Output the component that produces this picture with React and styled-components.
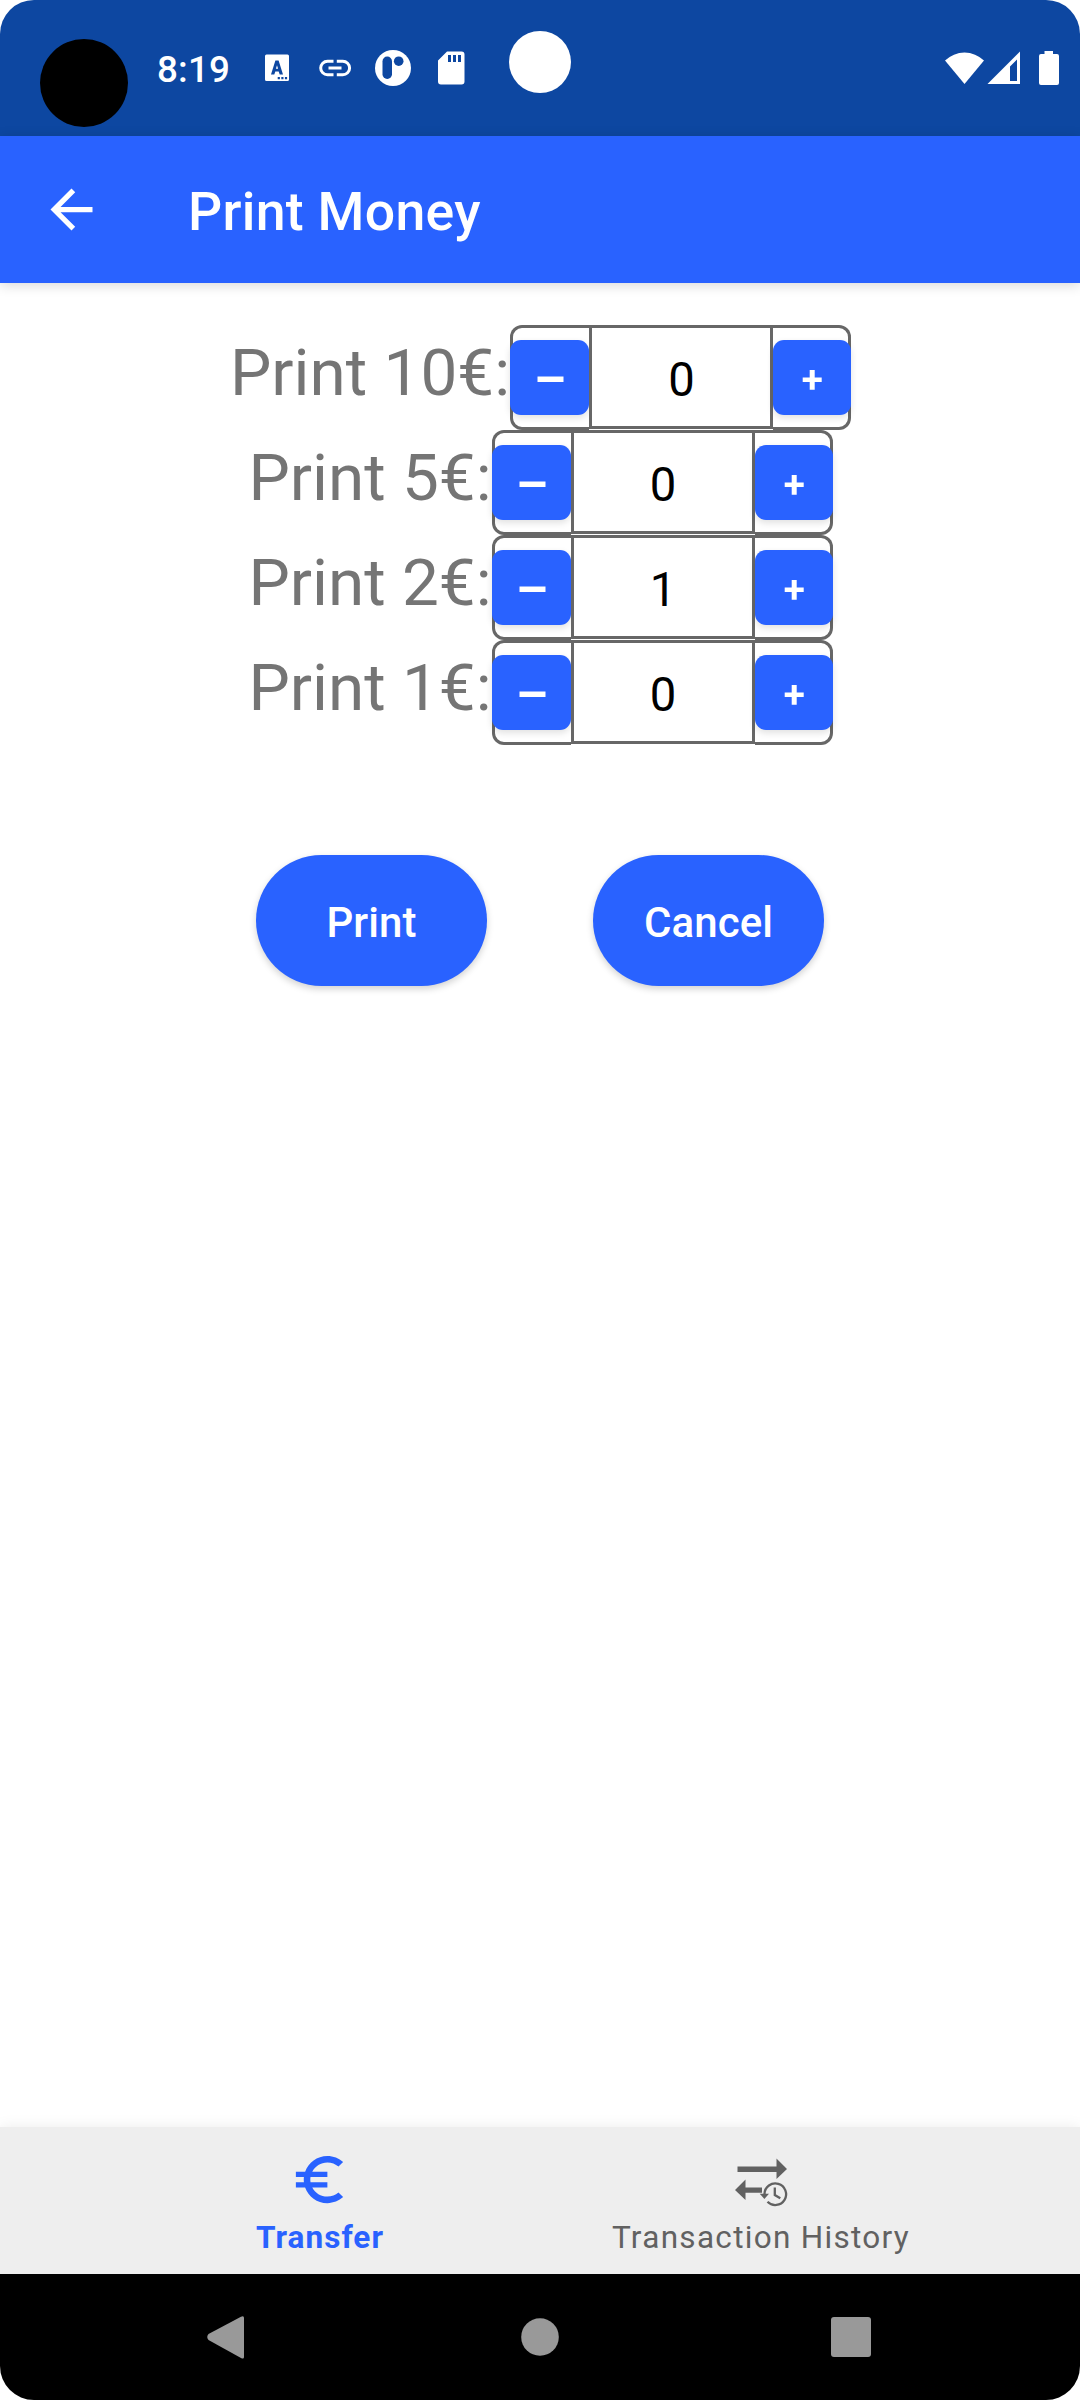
import React, { useState } from 'react';
import styled, { createGlobalStyle } from 'styled-components';

const GlobalStyle = createGlobalStyle`
  * { box-sizing: border-box; }
  body { margin: 0; background: #fff; font-family: Roboto, "Liberation Sans", sans-serif; }
  button { font-family: inherit; }
  svg { display: block; flex: none; }
`;

const Screen = styled.div`
  position: relative;
  display: flex;
  flex-direction: column;
  width: 1080px;
  height: 2400px;
  background: #fff;
  border-radius: 34px;
  overflow: hidden;
`;

const StatusBar = styled.header`
  display: flex;
  align-items: center;
  height: 136px;
  padding: 0 20px 0 157px;
  background: #0d47a1;
  color: #fff;
`;

const Clock = styled.span`
  width: 108px;
  font-size: 36.75px;
  font-weight: 500;
  line-height: 43px;
  letter-spacing: 0.2px;
  padding-top: 2px;
`;

const Notifications = styled.div`
  display: flex;
  flex: 1;
`;

const SystemIcons = styled.div`
  display: flex;
`;

const Dot = styled.div`
  position: absolute;
  left: ${(p) => p.$x}px;
  top: ${(p) => p.$y}px;
  width: ${(p) => p.$size}px;
  height: ${(p) => p.$size}px;
  border-radius: 50%;
  background: ${(p) => p.$color};
`;

const AppBar = styled.div`
  display: flex;
  align-items: center;
  gap: 84px;
  height: 147px;
  padding-left: 40px;
  background: #2962ff;
  color: #fff;
  box-shadow: 0 2px 12px rgba(0, 0, 0, 0.16);
  z-index: 1;
`;

const BackButton = styled.button`
  padding: 0 0 1px;
  border: 0;
  background: none;
  color: inherit;
`;

const Title = styled.h1`
  margin: 0;
  padding: 4px 0 0 1px;
  font-size: 53.6px;
  font-weight: 500;
  line-height: 62px;
  letter-spacing: 0.3px;
`;

const Content = styled.main`
  display: flex;
  flex: 1;
  flex-direction: column;
  align-items: center;
  padding-top: 42px;
`;

const Row = styled.div`
  display: flex;
  height: 105px;
`;

const Label = styled.span`
  padding: 9px 0 0 1px;
  color: #757575;
  font-size: 65.625px;
  line-height: 77px;
`;

const Stepper = styled.div`
  display: flex;
  align-items: center;
  width: 341px;
  height: 105px;
  border-radius: 12px;
  box-shadow: inset 0 0 0 3px #676767;
`;

const StepButton = styled.button`
  display: flex;
  align-items: center;
  justify-content: center;
  width: ${(p) => p.$width}px;
  height: 75px;
  padding: 0;
  border: 0;
  border-radius: 11px;
  background: #2962ff;
  color: #fff;
  box-shadow: 0 3px 7px rgba(0, 0, 0, 0.12);
`;

const Value = styled.output`
  width: 184px;
  height: 105px;
  padding-left: 1px;
  border-bottom: 1px solid #fff;
  box-shadow: inset 0 0 0 3px #676767;
  background: #fff;
  color: #000;
  font-size: 47.25px;
  line-height: 111px;
  text-align: center;
`;

const Actions = styled.div`
  display: flex;
  gap: 106px;
  padding-top: 110px;
`;

const ActionButton = styled.button`
  width: 231px;
  height: 131px;
  padding: 4px 0 0;
  border: 0;
  border-radius: 66px;
  background: #2962ff;
  color: #fff;
  font-size: 42px;
  font-weight: 500;
  letter-spacing: 0.1px;
  box-shadow: 0 3px 7px rgba(0, 0, 0, 0.18);
`;

const BottomTabs = styled.nav`
  display: flex;
  justify-content: center;
  height: 147px;
  padding-right: 1px;
  background: #eee;
  box-shadow: 0 0 14px rgba(0, 0, 0, 0.08);
`;

const Tab = styled.a`
  display: flex;
  flex-direction: column;
  align-items: center;
  width: 441px;
  padding-top: 21px;
  color: ${(p) => (p.$active ? '#2962ff' : '#616161')};
  font-size: 31.5px;
  font-weight: ${(p) => (p.$active ? 700 : 400)};
  letter-spacing: ${(p) => (p.$active ? 1.05 : 1.3)}px;
  line-height: 37px;
`;

const TabLabel = styled.span`
  padding: 8px 0 0 2px;
`;

const SystemNav = styled.footer`
  display: flex;
  align-items: center;
  height: 126px;
  background: #000;
  padding-left: 207px;
`;

const ROWS = [
  { amount: 10, count: 0 },
  { amount: 5, count: 0 },
  { amount: 2, count: 1 },
  { amount: 1, count: 0 },
];

function CashRow({ amount, count }) {
  const [value, setValue] = useState(count);
  return (
    <Row>
      <Label>Print {amount}€:</Label>
      <Stepper>
        <StepButton $width={79} aria-label="Decrease" onClick={() => setValue(Math.max(0, value - 1))}>
          <svg width="79" height="75" viewBox="0 0 79 75"><path d="M27.5 36.5h26v5.500h-26z" fill="currentColor" /></svg>
        </StepButton>
        <Value>{value}</Value>
        <StepButton $width={78} aria-label="Increase" onClick={() => setValue(value + 1)}>
          <svg width="78" height="75" viewBox="0 0 78 75"><path d="M36.7 30h5v7.400h7v4.600h-7v7.800h-5V42h-7v-4.600h7z" fill="currentColor" /></svg>
        </StepButton>
      </Stepper>
    </Row>
  );
}

export default function App() {
  return (
    <>
      <GlobalStyle />
      <Screen>
        <StatusBar>
          <Clock>8:19</Clock>
          <Notifications>
            <svg width="210" height="60" viewBox="0 0 210 60" fill="#fff">
              <path fillRule="evenodd" d="M1.500 16.500h21a1.500 1.500 0 0 1 1.500 1.500v23.500a1.500 1.500 0 0 1-1.500 1.500h-21A1.500 1.500 0 0 1 0 41.500V18A1.500 1.500 0 0 1 1.500 16.500zM10.400 22.500L6 36.500h3.300l1-3h3.400l1 3H18L13.600 22.500zm1.600 4.800l1.100 3.400h-2.200zM12.700 39v2.200h2.200V39zm3.600 0v2.200h2.200V39zm3.600 0v2.200h2.200V39z" />
              <path d="M68.500 23.200h-6a6.800 6.800 0 0 0 0 13.600h6M71.800 23.200h6a6.800 6.800 0 0 1 0 13.600h-6M63.500 30h13" fill="none" stroke="#fff" strokeWidth="3" />
              <circle cx="128" cy="30" r="18" />
              <rect x="117.500" y="18.500" width="9.500" height="22.500" rx="4.700" fill="#0d47a1" />
              <circle cx="133.700" cy="23.200" r="4.800" fill="#0d47a1" />
              <path fillRule="evenodd" d="M182 13.500h14.500a3 3 0 0 1 3 3v27a3 3 0 0 1-3 3H176a3 3 0 0 1-3-3v-21zM183 17v7h3v-7zm5 0v7h3v-7zm5 0v7h3v-7z" />
            </svg>
          </Notifications>
          <SystemIcons>
            <svg width="115" height="60" viewBox="0 0 115 60" fill="#fff">
              <path d="M0 22.500a28 28 0 0 1 39 0L19.500 46z" />
              <path fillRule="evenodd" d="M75 13.500V46H42.500zM72 21.500l-7 7V43h7z" />
              <path d="M99.500 13h8.500v3h4a2 2 0 0 1 2 2v27a2 2 0 0 1-2 2H96a2 2 0 0 1-2-2V18a2 2 0 0 1 2-2h3.500z" />
            </svg>
          </SystemIcons>
        </StatusBar>
        <AppBar>
          <BackButton aria-label="Back">
            <svg width="63" height="63" viewBox="0 0 24 24" fill="currentColor">
              <path d="M20 11H7.830l5.590-5.590L12 4l-8 8 8 8 1.410-1.410L7.830 13H20v-2z" />
            </svg>
          </BackButton>
          <Title>Print Money</Title>
        </AppBar>
        <Content>
          {ROWS.map((row) => <CashRow key={row.amount} {...row} />)}
          <Actions>
            <ActionButton>Print</ActionButton>
            <ActionButton>Cancel</ActionButton>
          </Actions>
        </Content>
        <BottomTabs>
          <Tab $active>
            <svg width="63" height="63" viewBox="0 0 24 24" fill="currentColor">
              <path d="M15 18.500c-2.510 0-4.680-1.420-5.760-3.500H15v-2H8.580c-.050-.330-.080-.660-.080-1s.030-.670.080-1H15V9H9.240C10.320 6.920 12.500 5.500 15 5.500c1.610 0 3.090.590 4.230 1.570L21 5.300C19.410 3.870 17.300 3 15 3c-3.920 0-7.240 2.510-8.480 6H3v2h3.060c-.040.330-.060.660-.060 1s.020.670.060 1H3v2h3.520c1.240 3.490 4.560 6 8.480 6 2.310 0 4.410-.870 6-2.300l-1.780-1.770c-1.130.980-2.600 1.570-4.220 1.570z" />
            </svg>
            <TabLabel>Transfer</TabLabel>
          </Tab>
          <Tab>
            <svg width="63" height="63" viewBox="0 0 63 63" fill="currentColor">
              <path d="M8.500 18.500h39v-8L58 21 47.500 31v-7h-39zM6 42l10.500-10.500v8h16.500v5.200H16.500V52z" />
              <path d="M30.700 45.700h9.300l-4.600 5.300z" />
              <path d="M35.500 46a10.800 10.800 0 1 1 3 7.700M45.800 39.500V47l5.500 3.200" fill="none" stroke="currentColor" strokeWidth="2.300" />
            </svg>
            <TabLabel>Transaction History</TabLabel>
          </Tab>
        </BottomTabs>
        <SystemNav>
          <svg width="664" height="60" viewBox="0 0 664 60" fill="#999">
            <path d="M1.500 27L34 9.800Q37 8.500 37 11v39Q37 52.500 34 51L1.500 33Q-1 30 1.500 27z" />
            <circle cx="333" cy="30" r="18.800" />
            <rect x="624" y="10" width="40" height="40" rx="3" />
          </svg>
        </SystemNav>
        <Dot $x={40} $y={39} $size={88} $color="#000" />
        <Dot $x={509.400} $y={31.300} $size={62} $color="#fff" />
      </Screen>
    </>
  );
}
